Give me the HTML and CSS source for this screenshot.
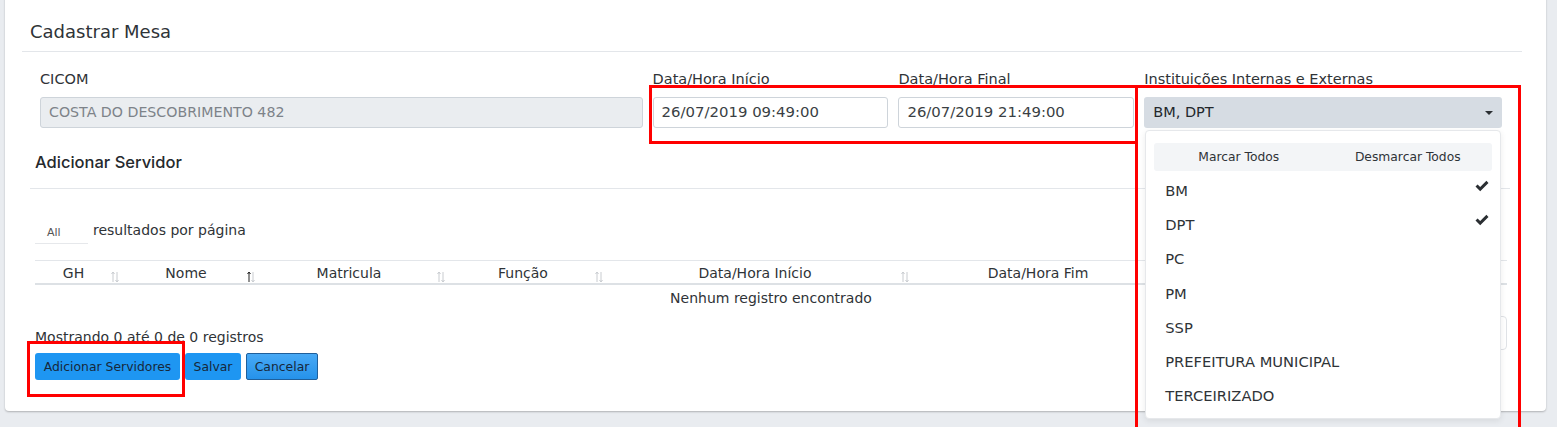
FILE: index.html
```html
<!DOCTYPE html>
<html lang="pt-BR">
<head>
<meta charset="utf-8">
<title>Cadastrar Mesa</title>
<link rel="stylesheet" href="styles.css">
</head>
<body>
<div class="page">
  <div class="card">
    <div class="card-head">
      <h1 class="title">Cadastrar Mesa</h1>
    </div>
    <div class="form-row">
      <div class="field f-cicom">
        <label class="lbl">CICOM</label>
        <div class="input disabled">COSTA DO DESCOBRIMENTO 482</div>
      </div>
      <div class="field f-date">
        <label class="lbl">Data/Hora Início</label>
        <div class="input">26/07/2019 09:49:00</div>
      </div>
      <div class="field f-date">
        <label class="lbl">Data/Hora Final</label>
        <div class="input">26/07/2019 21:49:00</div>
      </div>
      <div class="field f-inst">
        <label class="lbl">Instituições Internas e Externas</label>
        <div class="select-wrap">
          <div class="select">BM, DPT<span class="caret"></span></div>
          <div class="menu">
            <div class="menu-actions">
              <span>Marcar Todos</span>
              <span>Desmarcar Todos</span>
            </div>
            <ul class="menu-list">
              <li>BM<svg class="check" viewBox="0 0 14 12"><path d="M0.5 6.5L2.6 4.4L5.2 7L11.4 0.8L13.5 2.9L5.2 11.2Z" fill="#2b2f33"/></svg></li>
              <li>DPT<svg class="check" viewBox="0 0 14 12"><path d="M0.5 6.5L2.6 4.4L5.2 7L11.4 0.8L13.5 2.9L5.2 11.2Z" fill="#2b2f33"/></svg></li>
              <li>PC</li>
              <li>PM</li>
              <li>SSP</li>
              <li>PREFEITURA MUNICIPAL</li>
              <li>TERCEIRIZADO</li>
            </ul>
          </div>
        </div>
      </div>
    </div>

    <div class="section">
      <h2 class="subtitle">Adicionar Servidor</h2>
      <div class="length-row">
        <div class="length-select">All</div>
        <span class="length-text">resultados por página</span>
      </div>
      <div class="table">
        <div class="thead">
          <div class="th c1">GH<svg class="sort" viewBox="0 0 10 12"><path d="M3 1v10M1.5 3L3 1l1.5 2" stroke="#c9ccd0" fill="none" stroke-width="1"/><path d="M7 1v10M5.5 9L7 11l1.5-2" stroke="#c9ccd0" fill="none" stroke-width="1"/></svg></div>
          <div class="th c2">Nome<svg class="sort" viewBox="0 0 10 12"><path d="M3 1v10M1.5 3L3 1l1.5 2" stroke="#222" fill="none" stroke-width="1"/><path d="M7 1v10M5.5 9L7 11l1.5-2" stroke="#c9ccd0" fill="none" stroke-width="1"/></svg></div>
          <div class="th c3">Matricula<svg class="sort" viewBox="0 0 10 12"><path d="M3 1v10M1.5 3L3 1l1.5 2" stroke="#c9ccd0" fill="none" stroke-width="1"/><path d="M7 1v10M5.5 9L7 11l1.5-2" stroke="#c9ccd0" fill="none" stroke-width="1"/></svg></div>
          <div class="th c4">Função<svg class="sort" viewBox="0 0 10 12"><path d="M3 1v10M1.5 3L3 1l1.5 2" stroke="#c9ccd0" fill="none" stroke-width="1"/><path d="M7 1v10M5.5 9L7 11l1.5-2" stroke="#c9ccd0" fill="none" stroke-width="1"/></svg></div>
          <div class="th c5">Data/Hora Início<svg class="sort" viewBox="0 0 10 12"><path d="M3 1v10M1.5 3L3 1l1.5 2" stroke="#c9ccd0" fill="none" stroke-width="1"/><path d="M7 1v10M5.5 9L7 11l1.5-2" stroke="#c9ccd0" fill="none" stroke-width="1"/></svg></div>
          <div class="th c6">Data/Hora Fim</div>
          <div class="th c7"></div>
        </div>
        <div class="empty">Nenhum registro encontrado</div>
      </div>
      <div class="info-row">
        <span class="info">Mostrando 0 até 0 de 0 registros</span>
        <div class="pager"></div>
      </div>
      <div class="buttons">
        <button class="btn b-add">Adicionar Servidores</button>
        <button class="btn b-save">Salvar</button>
        <button class="btn btn-alt">Cancelar</button>
      </div>
    </div>
  </div>
</div>
<div class="mark mark-dates"></div>
<div class="mark mark-inst"></div>
<div class="mark mark-add"></div>
</body>
</html>
```

FILE: styles.css
```css
* { box-sizing: border-box; }
html, body { margin: 0; padding: 0; }
body {
  background: #e9ecf0;
  font-family: "DejaVu Sans", Verdana, sans-serif;
  color: #2b2f33;
  width: 1557px;
  height: 427px;
  overflow: hidden;
  position: relative;
}
.page { padding: 0 11px 0 5px; }
.card {
  background: #fff;
  margin-top: -6px;
  height: 417px;
  border-radius: 0 0 4px 4px;
  box-shadow: 0 1px 2px rgba(0,0,0,0.25);
  padding: 0 24px 0 17px;
}
.card-head {
  border-bottom: 1px solid #e3e6ea;
  padding: 27px 0 0 8px;
  height: 58px;
}
.title {
  margin: 0;
  font-weight: normal;
  font-size: 18px;
  line-height: 22px;
  color: #2f3337;
}
.form-row {
  display: flex;
  gap: 10px;
  padding: 19px 20px 0 18px;
}
.field { display: flex; flex-direction: column; }
.f-cicom { width: 603px; }
.f-date { width: 236px; }
.f-inst { width: 358px; }
.lbl {
  font-size: 14.5px;
  line-height: 17px;
  height: 26px;
  color: #2f3337;
}
.input {
  height: 31px;
  border: 1px solid #ced4da;
  border-radius: 3px;
  padding: 0 8px;
  font-size: 14.9px;
  line-height: 29px;
  color: #3a3f44;
  background: #fff;
}
.input.disabled {
  background: #eaedf0;
  color: #7d8389;
  font-size: 14.2px;
}
.select-wrap { position: relative; }
.select {
  height: 31px;
  border-radius: 3px;
  background: #d6dce3;
  padding: 0 9px;
  font-size: 14.5px;
  line-height: 31px;
  color: #23272b;
  position: relative;
}
.caret {
  position: absolute;
  right: 9px;
  top: 14px;
  border-left: 4px solid transparent;
  border-right: 4px solid transparent;
  border-top: 4px solid #2b2f33;
}
.menu {
  position: absolute;
  top: 33px;
  left: 1px;
  width: 356px;
  height: 289px;
  background: #fff;
  border: 1px solid #e6e8eb;
  border-radius: 4px;
  box-shadow: 0 2px 6px rgba(0,0,0,0.08);
  padding: 12px 8px 0 8px;
  z-index: 5;
}
.menu-actions {
  display: flex;
  background: #f3f5f7;
  border-radius: 3px;
  height: 28px;
  align-items: center;
  font-size: 12.3px;
  color: #2f3337;
}
.menu-actions span { flex: 1; text-align: center; }
.menu-list { list-style: none; margin: 0; padding: 3px 0 0 0; }
.menu-list li {
  height: 34.2px;
  line-height: 34px;
  padding-left: 11px;
  font-size: 14.7px;
  color: #2f3337;
  position: relative;
}
.check {
  position: absolute;
  right: 3px;
  top: 6px;
  width: 14px;
  height: 12px;
}

.section { padding: 0 12px 0 8px; }
.subtitle {
  margin: 0;
  font-family: Inter, "Open Sans", sans-serif;
  font-weight: 500;
  font-size: 16.5px;
  line-height: 20px;
  padding: 24px 0 16px 5px;
  border-bottom: 1px solid #e3e6ea;
  color: #25292d;
}
.length-row {
  display: flex;
  padding: 31px 0 0 5px;
  height: 71px;
  align-items: flex-start;
}
.length-select {
  width: 53px;
  height: 24px;
  border-bottom: 1px solid #e6e8eb;
  font-size: 11px;
  color: #555;
  padding: 6px 0 0 12px;
}
.length-text {
  font-size: 14px;
  margin-left: 5px;
  padding-top: 2px;
  color: #2f3337;
}
.table { margin-left: 5px; margin-right: 3px; }
.thead {
  display: flex;
  border-top: 1px solid #e3e6ea;
  border-bottom: 2px solid #dde1e5;
  height: 25px;
}
.th {
  position: relative;
  text-align: center;
  padding-right: 12px;
  font-size: 14px;
  line-height: 24px;
  color: #2f3337;
}
.sort { position: absolute; right: 4px; top: 10px; width: 10px; height: 12px; }
.c1 { width: 89px; }
.c2 { width: 136px; }
.c3 { width: 190px; }
.c4 { width: 158px; }
.c5 { width: 306px; }
.c6 { width: 260px; }
.c7 { flex: 1; }
.empty {
  text-align: center;
  font-size: 14px;
  line-height: 24px;
  padding-top: 1px;
  color: #2f3337;
}
.info-row {
  display: flex;
  justify-content: space-between;
  align-items: flex-start;
  padding: 6px 3px 0 5px;
  height: 43px;
}
.info { font-size: 14px; line-height: 17px; padding-top: 13px; color: #2f3337; }
.pager {
  width: 120px;
  height: 34px;
  border: 1px solid #dfe2e6;
  border-radius: 4px;
}
.buttons { display: flex; gap: 5px; padding-left: 5px; }
.btn {
  font-family: "DejaVu Sans", Verdana, sans-serif;
  font-size: 12.4px;
  height: 27px;
  padding: 0;
  border: none;
  border-radius: 3px;
  background: #1e96f2;
  color: #17283a;
  text-align: center;
}
.b-add { width: 145px; }
.b-save { width: 56px; }
.btn-alt {
  width: 72px;
  background: linear-gradient(#48a9f5, #2592ea);
  border: 1px solid #1f5f9b;
  border-radius: 2px;
}
.mark {
  position: absolute;
  border: 3px solid #ff0000;
  z-index: 10;
  pointer-events: none;
}
.mark-dates { left: 649px; top: 85px; width: 489px; height: 59px; }
.mark-inst { left: 1135px; top: 85px; width: 386px; height: 360px; }
.mark-add { left: 27px; top: 341px; width: 158px; height: 56px; }
```
